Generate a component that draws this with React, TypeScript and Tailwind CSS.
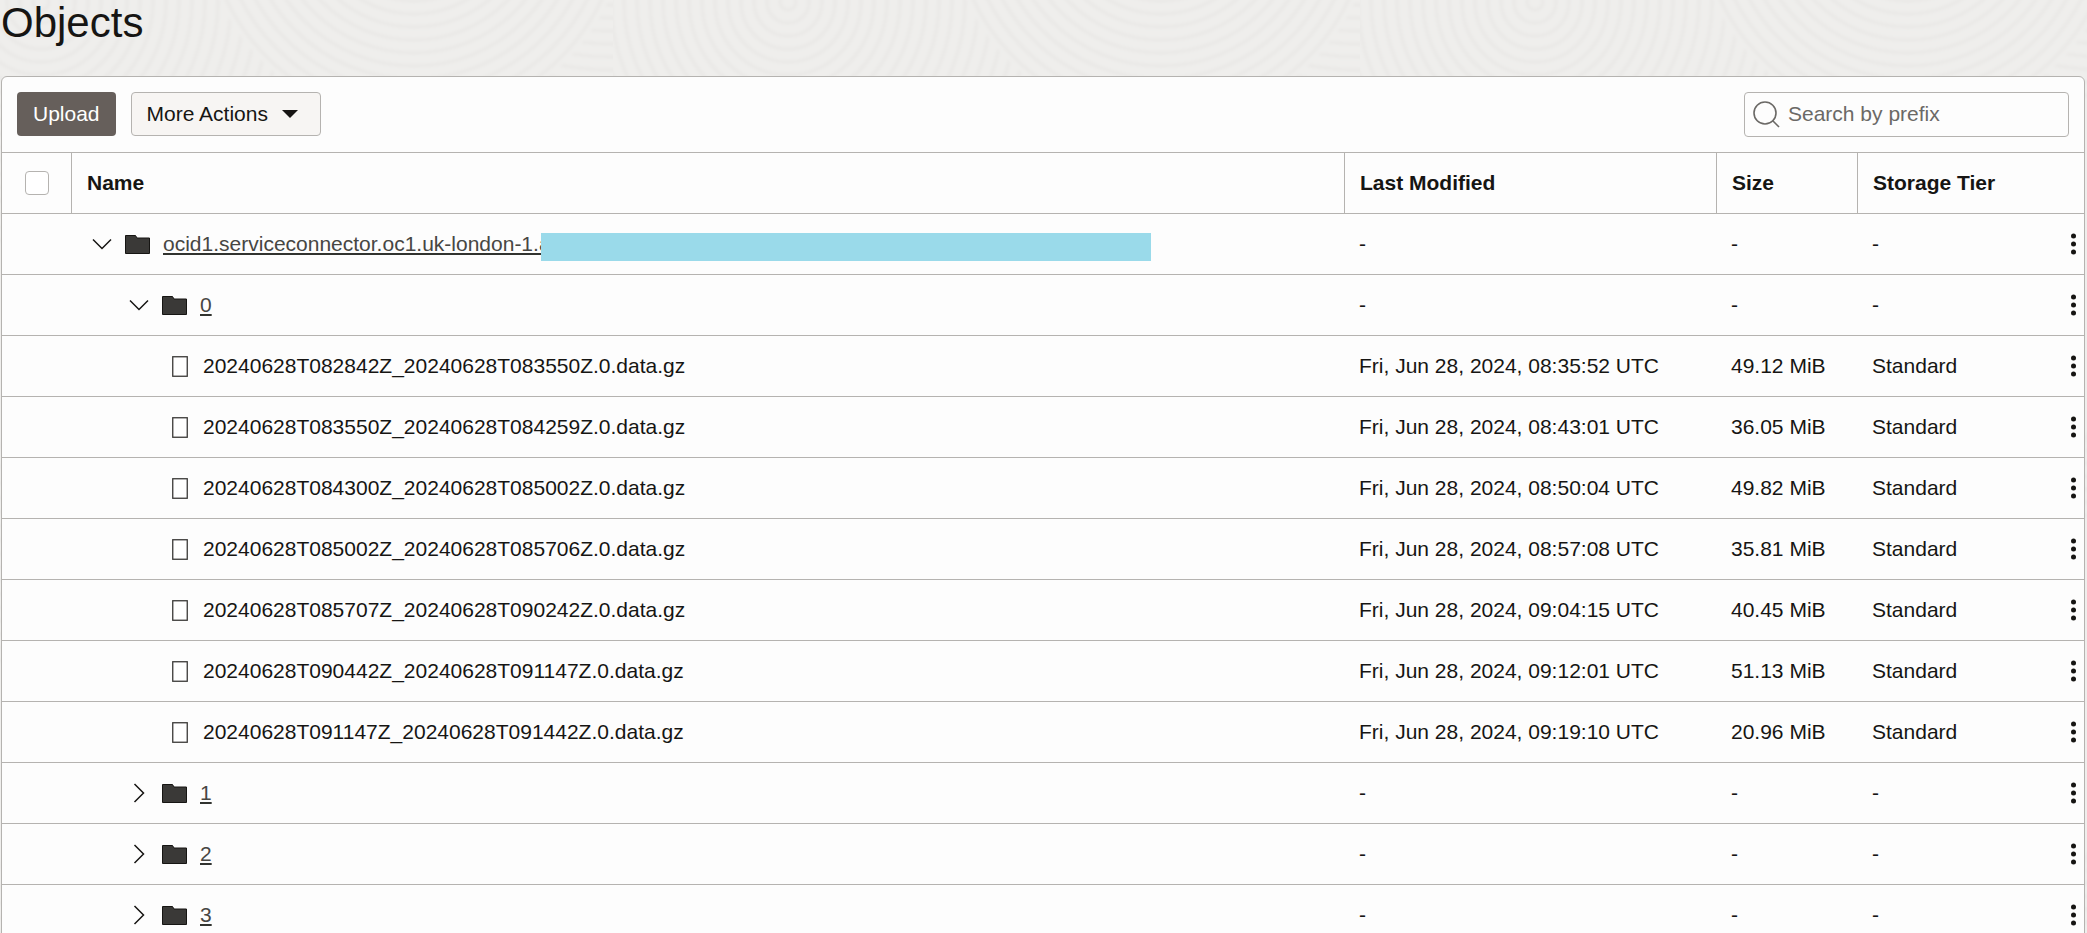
import React from "react";

type Row = {
  kind: "folder" | "file";
  level: 0 | 1 | 2;
  name: string;
  open?: boolean;
  redacted?: boolean;
  modified?: string;
  size?: string;
  tier?: string;
};

const file = (name: string, time: string, size: string): Row => ({
  kind: "file",
  level: 2,
  name,
  modified: `Fri, Jun 28, 2024, ${time} UTC`,
  size,
  tier: "Standard",
});

const rows: Row[] = [
  { kind: "folder", level: 0, name: "ocid1.serviceconnector.oc1.uk-london-1.a", open: true, redacted: true },
  { kind: "folder", level: 1, name: "0", open: true },
  file("20240628T082842Z_20240628T083550Z.0.data.gz", "08:35:52", "49.12 MiB"),
  file("20240628T083550Z_20240628T084259Z.0.data.gz", "08:43:01", "36.05 MiB"),
  file("20240628T084300Z_20240628T085002Z.0.data.gz", "08:50:04", "49.82 MiB"),
  file("20240628T085002Z_20240628T085706Z.0.data.gz", "08:57:08", "35.81 MiB"),
  file("20240628T085707Z_20240628T090242Z.0.data.gz", "09:04:15", "40.45 MiB"),
  file("20240628T090442Z_20240628T091147Z.0.data.gz", "09:12:01", "51.13 MiB"),
  file("20240628T091147Z_20240628T091442Z.0.data.gz", "09:19:10", "20.96 MiB"),
  { kind: "folder", level: 1, name: "1" },
  { kind: "folder", level: 1, name: "2" },
  { kind: "folder", level: 1, name: "3" },
];

const indent = { 0: "pl-[21px]", 1: "pl-[58px]", 2: "pl-[101px]" };

function Rings({ cx, cy, from, to }: { cx: number; cy: number; from: number; to: number }) {
  const radii: number[] = [];
  for (let r = from; r <= to; r += 13) radii.push(r);
  return (
    <g>
      <circle cx={cx} cy={cy} r={to + 6} fill="#efeeec" stroke="none" />
      {radii.map((r) => (
        <circle key={r} cx={cx} cy={cy} r={r} />
      ))}
    </g>
  );
}

function Backdrop() {
  return (
    <svg className="absolute inset-0 size-full" aria-hidden="true">
      <defs>
        <filter id="soft">
          <feGaussianBlur stdDeviation="1.5" />
        </filter>
        <pattern id="grain" x="613" y="0" width="747" height="420" patternUnits="userSpaceOnUse">
          <rect width="747" height="420" fill="#efeeec" />
          <g fill="none" stroke="#eae9e7" strokeWidth="4" filter="url(#soft)">
            <Rings cx={747} cy={-210} from={150} to={306} />
            <Rings cx={175} cy={2} from={8} to={252} />
            <Rings cx={548} cy={-90} from={26} to={208} />
          </g>
        </pattern>
      </defs>
      <rect width="100%" height="100%" fill="url(#grain)" />
    </svg>
  );
}

function Chevron({ open }: { open?: boolean }) {
  return (
    <svg width="20" height="20" viewBox="0 0 20 20" fill="none" stroke="#161513" strokeWidth="1.5" aria-hidden="true">
      <path d={open ? "M1 5.5 10 14.5 19 5.5" : "M5.5 1 14.5 10 5.5 19"} />
    </svg>
  );
}

function FolderIcon() {
  return (
    <svg className="shrink-0" width="25" height="19" viewBox="0 0 25 19" aria-hidden="true">
      <path d="M.5.5H10.5L12 3H24.5V18.5H.5Z" fill="#3a3937" stroke="#161513" />
    </svg>
  );
}

function FileIcon() {
  return (
    <svg className="shrink-0" width="16" height="21" viewBox="0 0 16 21" aria-hidden="true">
      <rect x=".75" y=".75" width="14.5" height="19.5" fill="#fff" stroke="#3a3937" strokeWidth="1.3" />
    </svg>
  );
}

function NameCell({ row }: { row: Row }) {
  if (row.kind === "file") {
    return (
      <div className={`flex items-center gap-[15px] ${indent[row.level]}`}>
        <FileIcon />
        <span>{row.name}</span>
      </div>
    );
  }
  return (
    <div className={`flex items-center gap-[13px] ${indent[row.level]}`}>
      <button type="button" aria-label={`Toggle ${row.name}`} aria-expanded={!!row.open}>
        <Chevron open={row.open} />
      </button>
      <FolderIcon />
      <div className="flex items-center">
        <a
          href="#"
          className="text-[#474643] underline decoration-[#31332f] decoration-2 underline-offset-2"
        >
          {row.name}
        </a>
        {row.redacted && <span className="z-10 mt-1.5 -ml-2.5 h-7 w-[610px] bg-[#9adaea]" />}
      </div>
    </div>
  );
}

export default function App() {
  const head = "border-b border-l border-[#b5b3b0] pl-[15px] text-left font-bold";
  const cell = "border-b border-[#b5b3b0] pl-[15px]";
  return (
    <div className="relative h-screen overflow-y-auto bg-[#efeeec] font-['Liberation_Sans',Arial,sans-serif] text-[21px] leading-6 text-[#161513] [scrollbar-width:none]">
      <Backdrop />
      <main className="relative">
        <h1 className="h-19 pl-px text-[42px] leading-[46px]">Objects</h1>
        <section className="ml-px mr-0.5 rounded-t-md border border-[#b5b3b0] bg-[#fdfdfd]">
          <div className="flex h-[75px] items-center gap-[15px] px-[15px] pb-px">
            <button type="button" className="h-11 rounded bg-[#665f5b] px-4 text-white">
              Upload
            </button>
            <button
              type="button"
              className="flex h-11 w-[190px] items-center gap-[14px] rounded border border-[#b5b3b0] bg-[#f7f5f3] pl-[15px]"
            >
              More Actions
              <svg width="16" height="8" viewBox="0 0 16 8" aria-hidden="true">
                <path d="M0 0H16L8 8Z" fill="#161513" />
              </svg>
            </button>
            <label className="ml-auto flex h-[45px] w-[325px] items-center gap-2 rounded border border-[#b5b3b0] pl-2">
              <svg className="shrink-0" width="27" height="27" viewBox="0 0 27 27" fill="none" stroke="#6b6966" strokeWidth="1.6" aria-hidden="true">
                <circle cx="12" cy="12" r="11" />
                <path d="M19.5 19.5 26 26" />
              </svg>
              <input
                type="text"
                aria-label="Search by prefix"
                placeholder="Search by prefix"
                className="min-w-0 flex-1 bg-transparent outline-none placeholder:text-[#6b6966]"
              />
            </label>
          </div>
          <table className="w-full table-fixed border-separate border-spacing-0">
            <colgroup>
              <col className="w-[69px]" />
              <col />
              <col className="w-[372px]" />
              <col className="w-[141px]" />
              <col className="w-[199px]" />
              <col className="w-7" />
            </colgroup>
            <thead>
              <tr className="h-[62px]">
                <th className="border-y border-[#b5b3b0]">
                  <input
                    type="checkbox"
                    aria-label="Select all objects"
                    className="mx-auto block size-6 appearance-none rounded border border-[#b5b3b0] bg-white"
                  />
                </th>
                <th className={`border-t ${head}`}>Name</th>
                <th className={`border-t ${head}`}>Last Modified</th>
                <th className={`border-t ${head}`}>Size</th>
                <th className={`border-t ${head}`} colSpan={2}>
                  Storage Tier
                </th>
              </tr>
            </thead>
            <tbody>
              {rows.map((row) => (
                <tr key={row.name} className="h-[61px]">
                  <td className="border-b border-[#b5b3b0]" />
                  <td className="border-b border-[#b5b3b0]">
                    <NameCell row={row} />
                  </td>
                  <td className={cell}>{row.modified ?? "-"}</td>
                  <td className={cell}>{row.size ?? "-"}</td>
                  <td className={cell}>{row.tier ?? "-"}</td>
                  <td className="border-b border-[#b5b3b0]">
                    <button type="button" aria-label={`Actions for ${row.name}`} className="ml-[13px] block">
                      <svg width="9" height="24" viewBox="0 0 9 24" fill="#161513" aria-hidden="true">
                        <circle cx="4.5" cy="4" r="2.5" />
                        <circle cx="4.5" cy="12" r="2.5" />
                        <circle cx="4.5" cy="20" r="2.5" />
                      </svg>
                    </button>
                  </td>
                </tr>
              ))}
            </tbody>
          </table>
        </section>
      </main>
    </div>
  );
}
